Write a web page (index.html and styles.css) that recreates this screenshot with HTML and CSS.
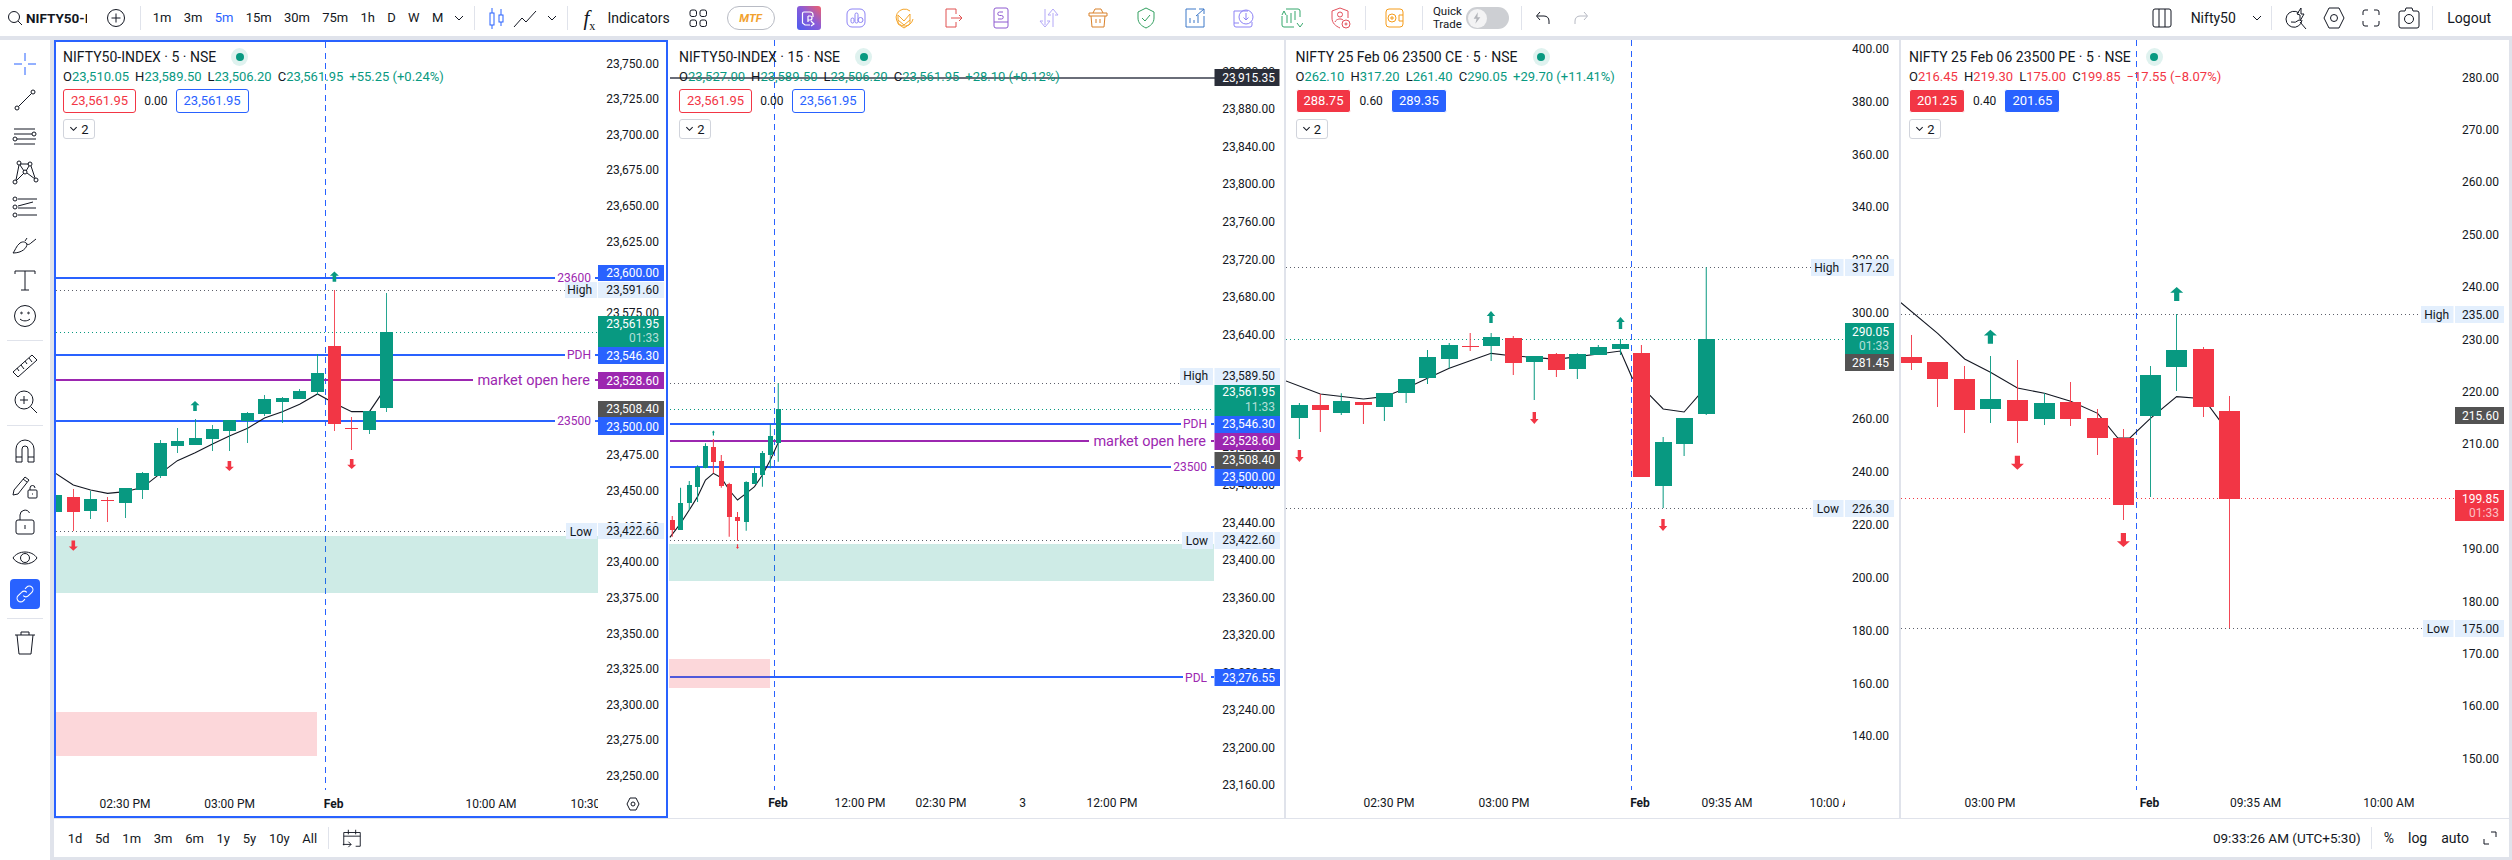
FILE: index.html
```html
<!DOCTYPE html>
<html lang="en">
<head>
<meta charset="utf-8">
<title>NIFTY50-INDEX chart</title>
<link rel="stylesheet" href="styles.css">
</head>
<body>
<div class="app">
<header class="topbar">
  <div class="search"><svg class="i16" viewBox="0 0 16 16"><circle cx="7" cy="7" r="5.5"/><path d="M11 11l4 4"/></svg><span class="sym">NIFTY50-INDEX</span></div>
  <button class="ib w18 add"><svg class="i18" viewBox="0 0 18 18"><circle cx="9" cy="9" r="8.5"/><path d="M9 4.5v9M4.5 9h9"/></svg></button>
  <i class="sep"></i>
  <nav class="tfs">
    <span>1m</span><span>3m</span><span class="on">5m</span><span>15m</span><span>30m</span><span>75m</span><span>1h</span><span>D</span><span>W</span><span>M</span>
    <svg class="chev" viewBox="0 0 10 6"><path d="M1 1l4 4 4-4"/></svg>
  </nav>
  <i class="sep s-a"></i>
  <button class="ib w41"><svg class="i24 blue" viewBox="0 0 24 24"><path d="M8 2v5M8 19v4M17 3v6M17 16v4"/><rect x="6" y="7" width="4" height="12"/><rect x="15" y="9" width="4" height="7"/></svg></button>
  <button class="ib w18"><svg class="i24" viewBox="0 0 24 24"><path d="M1 21l8-9 4 4 10-11"/></svg></button>
  <svg class="chev chev-b" viewBox="0 0 10 6"><path d="M1 1l4 4 4-4"/></svg>
  <i class="sep"></i>
  <span class="fx">f<sub>x</sub></span>
  <span class="label">Indicators</span>
  <svg class="i24 grid" viewBox="0 0 24 24"><rect x="4" y="4" width="6.5" height="6.5" rx="2"/><rect x="14" y="4" width="6.5" height="6.5" rx="2"/><rect x="4" y="14" width="6.5" height="6.5" rx="2"/><rect x="14" y="14" width="6.5" height="6.5" rx="2"/></svg>
  <span class="mtf">MTF</span>
  <svg class="brand" viewBox="0 0 24 24"><defs><linearGradient id="gb" x1="0" y1="1" x2="1" y2="0"><stop offset="0" stop-color="#4b5cf0"/><stop offset=".55" stop-color="#8d5bd6"/><stop offset="1" stop-color="#f0606a"/></linearGradient></defs><rect width="24" height="24" rx="3" fill="url(#gb)"/><path d="M7 6h6a3 3 0 0 1 3 3v2M7 6a1.500 1.500 0 0 0-1.500 1.500V17L8 19h5M11 10v6M11 10h2a2 2 0 0 1 0 4h-2M14 15l3 3-3 2" class="wh"/></svg>
  <div class="apps">
    <button class="ib w48"><svg class="i24 c-lav" viewBox="0 0 24 24"><rect x="3" y="3" width="18" height="18" rx="5"/><rect x="7" y="12" width="3" height="5" rx="1.500"/><rect x="11" y="7" width="3" height="10" rx="1.500"/><circle cx="16.500" cy="14" r="2.500"/></svg></button>
    <button class="ib w48"><svg class="i24 c-org" viewBox="0 0 24 24"><path d="M18 5a8.500 8.500 0 1 0 3 8M6 9l6 6 6-7v10l-6 4-6-4zM6 14l6 5 6-5"/></svg></button>
    <button class="ib w48"><svg class="i24 c-red" viewBox="0 0 24 24"><path d="M15 8V3H5v18h10v-5M10 12h11M18 9l3 3-3 3"/></svg></button>
    <button class="ib w48"><svg class="i24 c-pur" viewBox="0 0 24 24"><rect x="5" y="2" width="14" height="20" rx="2"/><path d="M5 16h14M14 6h-3.500a1.500 1.500 0 0 0 0 3.500h2a1.500 1.500 0 0 1 0 3.500H9"/></svg></button>
    <button class="ib w48"><svg class="i24 c-lil" viewBox="0 0 24 24"><path d="M8 3v16M8 21l-5-6h3M8 21l5-6h-3M16 21V7M16 3l-5 6h3M16 3l5 6h-3"/></svg></button>
    <button class="ib w48"><svg class="i24 c-brn" viewBox="0 0 24 24"><path d="M3 7h18v3H3zM5 10l1 11h12l1-11M7 7l2-4h6l2 4M10 13v4M14 13v4"/></svg></button>
    <button class="ib w48"><svg class="i24 c-grn" viewBox="0 0 24 24"><path d="M12 2l8 4v6c0 5-3.500 8-8 10-4.500-2-8-5-8-10V6zM8 12l3 3 5-6"/></svg></button>
    <button class="ib w48"><svg class="i24 c-blu" viewBox="0 0 24 24"><path d="M13 3H3v18h18V10M7 17v-5M11 17v-3M15 17V9M13 10l8-7M16 3h5v5"/></svg></button>
    <button class="ib w48"><svg class="i24 c-lav" viewBox="0 0 24 24"><path d="M3 5h14M3 5v14a2 2 0 0 0 2 2h14a2 2 0 0 0 2-2v-3M3 17h5"/><circle cx="15" cy="11" r="7"/><path d="M15 7v7M12.500 11.500L15 14l2.500-2.500"/></svg></button>
    <button class="ib w48"><svg class="i24 c-gr2" viewBox="0 0 24 24"><path d="M7 3h12a2 2 0 0 1 2 2v6M3 10v9a2 2 0 0 0 2 2h10M8 9v8M12 7v10M16 5v9M3 9l2-4 2 4M18 17l3 4 3-4"/></svg></button>
    <button class="ib w48"><svg class="i24 c-rd2" viewBox="0 0 24 24"><path d="M12 2l8 3v7M12 22c-4.500-2-8-5-8-10V5l8-3"/><circle cx="12" cy="8.500" r="2.500"/><path d="M7 16c1-3 6-4 8-2"/><circle cx="18" cy="18" r="4"/><circle cx="18" cy="18" r="1"/></svg></button>
  </div>
  <i class="sep s-b"></i>
  <button class="ib w56"><svg class="i24 c-wal" viewBox="0 0 24 24"><rect x="4" y="3" width="17" height="18" rx="3"/><path d="M21 9h-4v6h4"/><circle cx="10" cy="12" r="4"/><path d="M10 10v4M8 12h4"/></svg></button>
  <i class="sep"></i>
  <span class="quick">Quick<br>Trade</span>
  <span class="toggle"><span class="knob"><svg viewBox="0 0 12 16"><path d="M7 1L2 9h3.500L4 15l6-8H6.500z"/></svg></span></span>
  <i class="sep s-c"></i>
  <button class="ib w42"><svg class="i18" viewBox="0 0 18 18"><path d="M6 3L2.500 7 6 11M3 7h7c3 0 5 2 5 5v3"/></svg></button>
  <button class="ib w34 off"><svg class="i18" viewBox="0 0 18 18"><path d="M12 3l3.500 4-3.500 4M15 7H8c-3 0-5 2-5 5v3"/></svg></button>
  <div class="right">
    <svg class="i24 cols" viewBox="0 0 24 24"><rect x="3" y="3" width="18" height="18" rx="2"/><path d="M9 3v18M15 3v18"/></svg>
    <span class="label lay">Nifty50</span>
    <svg class="chev chev-c" viewBox="0 0 10 6"><path d="M1 1l4 4 4-4"/></svg>
    <i class="sep"></i>
    <button class="ib w38 q"><svg class="i24" viewBox="0 0 24 24"><path d="M15 7a8 8 0 1 0 3 7M15 14a8 8 0 0 1-8 2M16 16l6 7M13 8l4-6v6h3l-4 7v-6z"/></svg></button>
    <button class="ib w375"><svg class="i24" viewBox="0 0 24 24"><path d="M2 12l5-10h10l5 10-5 10H7z"/><circle cx="12" cy="12" r="3.500"/></svg></button>
    <button class="ib w375"><svg class="i18" viewBox="0 0 18 18"><path d="M1 6V3a2 2 0 0 1 2-2h3M12 1h3a2 2 0 0 1 2 2v3M17 12v3a2 2 0 0 1-2 2h-3M6 17H3a2 2 0 0 1-2-2v-3"/></svg></button>
    <button class="ib w375"><svg class="i24" viewBox="0 0 24 24"><path d="M8 5l1-3h6l1 3h4a2 2 0 0 1 2 2v13a2 2 0 0 1-2 2H4a2 2 0 0 1-2-2V7a2 2 0 0 1 2-2z"/><circle cx="12" cy="13" r="4.500"/></svg></button>
    <i class="sep s-d"></i>
    <span class="label logout">Logout</span>
  </div>
</header>

<div class="main">
<nav class="tools">
  <button class="tool blue"><svg viewBox="0 0 28 28"><path d="M14 3v8M14 17v8M3 14h8M17 14h8"/></svg></button>
  <button class="tool"><svg viewBox="0 0 28 28"><circle cx="6" cy="22" r="2"/><circle cx="22" cy="6" r="2"/><path d="M7.500 20.500l13-13"/></svg></button>
  <button class="tool"><svg viewBox="0 0 28 28"><path d="M3 7h21M3 12h18M6 17h19M3 22h21"/><circle cx="23" cy="12" r="2"/><circle cx="4" cy="17" r="2"/></svg></button>
  <button class="tool"><svg viewBox="0 0 28 28"><circle cx="4" cy="24" r="2"/><circle cx="8" cy="5" r="2"/><circle cx="14" cy="14" r="2"/><circle cx="19" cy="6" r="2"/><circle cx="25" cy="22" r="2"/><path d="M5 22L8 7M9 7l4 6M5 23l8-8M15 13l3-5M16 15l8 6M20 8l4 12M9 6l9 0"/></svg></button>
  <button class="tool"><svg viewBox="0 0 28 28"><path d="M7 5h19M7 12l15-4M7 14h18M7 21h19"/><circle cx="4" cy="5" r="2"/><circle cx="4" cy="13" r="2"/><circle cx="4" cy="21" r="2"/></svg></button>
  <button class="tool"><svg viewBox="0 0 28 28"><path d="M2 23c2-2 3-7 7-10 3-2 6-1 7 1 0 4-5 9-14 9zM15 13c1 2 3 2 5 0l5-4M16 8l-2 3"/></svg></button>
  <button class="tool"><svg viewBox="0 0 28 28"><path d="M4 8V5h20v3M14 5v19M10 24h8"/></svg></button>
  <button class="tool"><svg viewBox="0 0 28 28"><circle cx="14" cy="14" r="10.500"/><path d="M9 17c2.500 2.500 7.500 2.500 10 0"/><circle cx="10.500" cy="11" r=".8"/><circle cx="17.500" cy="11" r=".8"/></svg></button>
  <i class="hr"></i>
  <button class="tool"><svg viewBox="0 0 28 28"><path d="M2 21L21 4l5 5L7 26zM6 17l2 3M10 14l3 4M14 10l2 3M18 7l3 4"/></svg></button>
  <button class="tool"><svg viewBox="0 0 28 28"><circle cx="13" cy="13" r="9"/><path d="M19.500 19.500L26 26M13 9v8M9 13h8"/></svg></button>
  <i class="hr"></i>
  <button class="tool"><svg viewBox="0 0 28 28"><path d="M5 26V13a9 9 0 0 1 18 0v13h-6V13a3 3 0 0 0-6 0v13zM5 21h6M17 21h6"/></svg></button>
  <button class="tool"><svg viewBox="0 0 28 28"><path d="M3 18L14 5l4 3L7 22l-5 1zM12 7l4 3"/><rect x="17" y="18" width="9" height="8" rx="1"/><path d="M19 18v-2a2.500 2.500 0 0 1 5 0M21.500 21.500v1"/></svg></button>
  <button class="tool"><svg viewBox="0 0 28 28"><rect x="5" y="12" width="18" height="14" rx="2"/><path d="M9 12V7a5 5 0 0 1 9.500-2M14 17v4"/></svg></button>
  <button class="tool"><svg viewBox="0 0 28 28"><path d="M2 14c5-8 19-8 24 0-5 8-19 8-24 0z"/><circle cx="14" cy="14" r="4.500"/></svg></button>
  <button class="tool active"><svg viewBox="0 0 28 28"><path d="M12 16a4 4 0 0 0 6 0l4-4a4 4 0 0 0-6-6l-2 2M16 12a4 4 0 0 0-6 0l-4 4a4 4 0 0 0 6 6l2-2"/></svg></button>
  <i class="hr"></i>
  <button class="tool"><svg viewBox="0 0 28 28"><path d="M4 6h20M10 6V3h8v3M6 6l2 19h12l2-19"/></svg></button>
</nav>

<div class="workspace">
<div class="panes">

<!-- pane 1 -->
<section class="pane p1 selected">
<svg class="plot" width="614" height="778" viewBox="54 40 614 778">
  <defs>
    <path id="au" d="M0-6L5-1H2V6H-2V-1H-5Z"/>
    <path id="ad" d="M0 6L5 1H2V-6H-2V1H-5Z"/>
    <clipPath id="c1"><rect x="56" y="42" width="542" height="774"/></clipPath>
    <clipPath id="c2"><rect x="669" y="40" width="545" height="778"/></clipPath>
    <clipPath id="c3"><rect x="1286" y="40" width="559" height="778"/></clipPath>
    <clipPath id="c4"><rect x="1901" y="40" width="554" height="778"/></clipPath>
  </defs>
  <path class="dash" d="M325.500 42V790"/>
  <path class="dot gy" d="M56 290.500H565M56 531.500H565"/>
  <path class="dot gn" d="M56 332.500H598"/>
  <path class="hl bl" d="M56 278H555M595 278H598M56 355H565M595 355H598M56 421H555M595 421H598"/>
  <path class="hl pu" d="M56 380H473M595 380H598"/>
  <rect class="zg" x="56" y="536" width="542" height="57"/>
  <rect class="zr" x="56" y="712" width="261" height="44"/>
  <g clip-path="url(#c1)"><g transform="translate(0 240) scale(.43367 .33333)">
    <path class="ema" d="M128 700L169 735 209 750 248 760 289 755 329 742 370 700 409 662 450 638 490 612 529 588 571 565 610 534 651 515 691 493 732 462 771 490 811 515 852 515 891 440"/>
    <path class="wg" stroke-width="2.300" d="M209 752V836M289 745V833M329 697V776M370 600V714M409 564V638M450 538V615M490 556V632M529 540V632M571 516V608M610 465V528M651 472V548M691 447V477M732 343V465M852 514V582M891 159V516"/>
    <path class="wr" stroke-width="2.300" d="M169 748V872M248 772V845M771 151V573M811 530V630"/>
    <path class="bg" stroke-width="30" d="M128 765V815M209 778V812M289 745V788M329 699V750M370 610V707M409 603V618M450 595V615M490 568V596M529 540V573M571 519V543M610 477V522M651 474V486M691 453V477M732 399V456M852 514V569M891 277V504"/>
    <path class="br" stroke-width="30" d="M169 772V815M248 780V783M771 318V551M811 564V567"/>
  </g></g>
  <use href="#au" class="fg" transform="translate(195 406) scale(.9 .85)"/>
  <use href="#au" class="fg" transform="translate(334.400 276.700) scale(.9 .85)"/>
  <use href="#ad" class="fr" transform="translate(229.400 466) scale(.9 .85)"/>
  <use href="#ad" class="fr" transform="translate(351.700 464) scale(.9 .85)"/>
  <use href="#ad" class="fr" transform="translate(73.300 545.700) scale(.9 .85)"/>
  <g class="ax">
    <text x="659" y="63.500">23,750.00</text><text x="659" y="99.100">23,725.00</text><text x="659" y="134.800">23,700.00</text><text x="659" y="170.400">23,675.00</text><text x="659" y="206">23,650.00</text><text x="659" y="241.600">23,625.00</text><text x="659" y="312.900">23,575.00</text><text x="659" y="455.400">23,475.00</text><text x="659" y="491">23,450.00</text><text x="659" y="526.600">23,425.00</text><text x="659" y="562.300">23,400.00</text><text x="659" y="597.900">23,375.00</text><text x="659" y="633.500">23,350.00</text><text x="659" y="669.100">23,325.00</text><text x="659" y="704.800">23,300.00</text><text x="659" y="740.400">23,275.00</text><text x="659" y="776">23,250.00</text>
  </g>
  <rect class="lb-bl" x="598" y="265" width="66" height="16"/>
  <rect class="lb-lt" x="565" y="282" width="32" height="16"/><rect class="lb-lt" x="598" y="282" width="66" height="16"/>
  <rect class="lb-gn" x="598" y="316" width="66" height="31"/>
  <rect class="lb-bl" x="598" y="347" width="66" height="17"/>
  <rect class="lb-pu" x="598" y="372" width="66" height="17"/>
  <rect class="lb-gy" x="598" y="401" width="66" height="16"/>
  <rect class="lb-bl" x="598" y="417" width="66" height="18"/>
  <rect class="lb-lt" x="566" y="523" width="31" height="16"/><rect class="lb-lt" x="598" y="523" width="66" height="16"/>
  <g class="lw">
    <text x="659" y="273">23,600.00</text><text x="659" y="324">23,561.95</text><text class="tm" x="659" y="338">01:33</text><text x="659" y="355.500">23,546.30</text><text x="659" y="380.500">23,528.60</text><text x="659" y="409">23,508.40</text><text x="659" y="426.500">23,500.00</text>
  </g>
  <g class="ld">
    <text x="659" y="290">23,591.60</text><text x="659" y="531">23,422.60</text><text x="592" y="290">High</text><text x="592" y="531.500">Low</text>
  </g>
  <g class="tagp">
    <text x="591" y="278">23600</text><text x="591" y="355">PDH</text><text x="591" y="421">23500</text><text class="big" x="590" y="380">market open here</text>
  </g>
  <g clip-path="url(#c1)" class="tx">
    <text x="125" y="804">02:30 PM</text><text x="229.600" y="804">03:00 PM</text><text class="b" x="333.700" y="804">Feb</text><text x="491" y="804">10:00 AM</text><text x="596" y="804">10:30 AM</text>
  </g>
  <path class="gear" d="M627 804l3-6h6l3 6-3 6h-6z"/><circle class="gear" cx="633" cy="804" r="2"/>
</svg>
<div class="legend">
  <div class="title">NIFTY50-INDEX · 5 · NSE<i class="live"></i></div>
  <div class="ohlc gr"><b>O</b>23,510.05<b>H</b>23,589.50<b>L</b>23,506.20<b>C</b>23,561.95<span>+55.25 (+0.24%)</span></div>
  <div class="quotes"><span class="q-r">23,561.95</span><em>0.00</em><span class="q-b">23,561.95</span></div>
  <button class="coll"><svg viewBox="0 0 10 6"><path d="M1.500 1l3.500 3.500L8.500 1"/></svg>2</button>
</div>
</section>

<!-- pane 2 -->
<section class="pane p2">
<svg class="plot" width="616" height="778" viewBox="668 40 616 778">
  <path class="dash" d="M774.500 40V790"/>
  <path class="dot gy" d="M670 383.500H1180M670 540.500H1182"/>
  <path class="dot gn" d="M670 409.500H1214"/>
  <path class="hl dk" d="M670 78H1215"/>
  <path class="hl bl" d="M670 424H1181M1211 424H1214M670 467H1171M1211 467H1214M670 677H1183M1211 677H1214"/>
  <path class="hl pu" d="M670 441H1089M1211 441H1214"/>
  <rect class="zg" x="669" y="544" width="545" height="37"/>
  <rect class="zr" x="669" y="659" width="101" height="29"/>
  <g clip-path="url(#c2)"><g transform="translate(660 340) scale(.39541 .33333)">
    <path class="ema" d="M25 592L52 550 74 510 95 470 115 420 135 400 155 413 175 450 196 480 218 460 239 440 259 405 279 360 299 308"/>
    <path class="wg" stroke-width="2.530" d="M52 443V570M74 423V510M95 376V486M115 310V385M218 424V572M239 382V432M259 333V440M279 252V385M299 130V365"/>
    <path class="wr" stroke-width="2.530" d="M31 528V590M135 297V400M155 345V443M175 428V590M196 516V602"/>
    <path class="bg" stroke-width="13" d="M52 489V570M74 435V489M95 380V440M115 318V385M218 426V545M239 400V432M259 339V405M279 288V345M299 207V308"/>
    <path class="br" stroke-width="13" d="M31 540V570M135 322V366M155 363V438M175 432V530M196 531V543"/>
  </g></g>
  <use href="#au" class="fg" transform="translate(713.400 433) scale(.3 .4)"/>
  <use href="#ad" class="fr" transform="translate(737.500 546.700) scale(.3 .4)"/>
  <g class="ax">
    <text x="1275" y="71.700">23,920.00</text><text x="1275" y="109.300">23,880.00</text><text x="1275" y="146.900">23,840.00</text><text x="1275" y="184.400">23,800.00</text><text x="1275" y="222">23,760.00</text><text x="1275" y="259.500">23,720.00</text><text x="1275" y="297.100">23,680.00</text><text x="1275" y="334.700">23,640.00</text><text x="1275" y="447.300">23,520.00</text><text x="1275" y="484.900">23,480.00</text><text x="1275" y="522.500">23,440.00</text><text x="1275" y="560">23,400.00</text><text x="1275" y="597.600">23,360.00</text><text x="1275" y="635.100">23,320.00</text><text x="1275" y="672.700">23,280.00</text><text x="1275" y="710.300">23,240.00</text><text x="1275" y="747.800">23,200.00</text><text x="1275" y="785.400">23,160.00</text>
  </g>
  <rect class="lb-dk" x="1214.500" y="69" width="65" height="17"/>
  <rect class="lb-lt" x="1180" y="368" width="33" height="17"/><rect class="lb-lt" x="1214.500" y="368" width="65.500" height="17"/>
  <rect class="lb-gn" x="1214.500" y="385" width="65.500" height="31"/>
  <rect class="lb-bl" x="1214.500" y="416" width="65.500" height="17"/>
  <rect class="lb-pu" x="1214.500" y="433" width="65.500" height="17"/>
  <rect class="lb-gy" x="1214.500" y="452" width="65.500" height="17"/>
  <rect class="lb-bl" x="1214.500" y="469" width="65.500" height="17"/>
  <rect class="lb-lt" x="1182" y="532" width="31" height="17"/><rect class="lb-lt" x="1214.500" y="532" width="65.500" height="17"/>
  <rect class="lb-bl" x="1214.500" y="669" width="65.500" height="17"/>
  <g class="lw">
    <text x="1275" y="77.500">23,915.35</text><text x="1275" y="392">23,561.95</text><text class="tm" x="1275" y="406.700">11:33</text><text x="1275" y="423.500">23,546.30</text><text x="1275" y="441">23,528.60</text><text x="1275" y="459.500">23,508.40</text><text x="1275" y="477">23,500.00</text><text x="1275" y="677.500">23,276.55</text>
  </g>
  <g class="ld">
    <text x="1275" y="376">23,589.50</text><text x="1275" y="540">23,422.60</text><text x="1208" y="376">High</text><text x="1208" y="540.500">Low</text>
  </g>
  <g class="tagp">
    <text x="1207" y="424">PDH</text><text x="1207" y="467">23500</text><text x="1207" y="677.500">PDL</text><text class="big" x="1206" y="441">market open here</text>
  </g>
  <g class="tx">
    <text class="b" x="778" y="803">Feb</text><text x="860" y="803">12:00 PM</text><text x="941" y="803">02:30 PM</text><text x="1022.600" y="803">3</text><text x="1112" y="803">12:00 PM</text>
  </g>
</svg>
<div class="legend">
  <div class="title">NIFTY50-INDEX · 15 · NSE<i class="live"></i></div>
  <div class="ohlc gr"><b>O</b>23,527.00<b>H</b>23,589.50<b>L</b>23,506.20<b>C</b>23,561.95<span>+28.10 (+0.12%)</span></div>
  <div class="quotes"><span class="q-r">23,561.95</span><em>0.00</em><span class="q-b">23,561.95</span></div>
  <button class="coll"><svg viewBox="0 0 10 6"><path d="M1.500 1l3.500 3.500L8.500 1"/></svg>2</button>
</div>
</section>

<!-- pane 3 -->
<section class="pane p3">
<svg class="plot" width="613" height="778" viewBox="1286 40 613 778">
  <path class="dash" d="M1631.500 40V790"/>
  <path class="dot gy" d="M1286 267.500H1811M1286 508.500H1813"/>
  <path class="dot gn" d="M1286 339.500H1845"/>
  <g clip-path="url(#c3)"><g transform="translate(1280 240) scale(.39541 .33333)">
    <path class="ema" d="M15 423L102 462 211 477 264 470 319 445 373 415 428 385 481 362 534 340 590 348 643 352 699 358 752 350 805 342 861 333 890 412 914 440 969 507 1022 516 1078 440"/>
    <path class="wg" stroke-width="2.530" d="M49 489V597M155 460V525M264 459V543M319 417V489M373 330V432M428 309V385M534 279V363M643 348V480M752 340V417M805 315V345M861 297V345M969 591V804M1022 534V648M1078 82V525"/>
    <path class="wr" stroke-width="2.530" d="M102 462V576M211 486V552M481 279V333M590 288V405M699 339V411M914 315V340"/>
    <path class="bg" stroke-width="43" d="M49 495V534M155 483V519M264 459V501M319 417V459M373 351V414M428 315V357M534 291V318M643 348V366M752 342V387M805 321V345M861 312V327M969 606V738M1022 534V612M1078 297V522"/>
    <path class="br" stroke-width="43" d="M102 495V510M211 486V495M481 318V321M590 294V369M699 342V390M914 339V711"/>
  </g></g>
  <use href="#au" class="fg" transform="translate(1491 317) scale(.85 1)"/>
  <use href="#au" class="fg" transform="translate(1620.500 323) scale(.85 1)"/>
  <use href="#ad" class="fr" transform="translate(1299.400 456) scale(.85 1)"/>
  <use href="#ad" class="fr" transform="translate(1534.300 418) scale(.85 1)"/>
  <use href="#ad" class="fr" transform="translate(1663 525) scale(.85 1)"/>
  <g class="ax">
    <text x="1889" y="48.700">400.00</text><text x="1889" y="101.600">380.00</text><text x="1889" y="154.500">360.00</text><text x="1889" y="207.400">340.00</text><text x="1889" y="260.300">320.00</text><text x="1889" y="313.200">300.00</text><text x="1889" y="419">260.00</text><text x="1889" y="471.900">240.00</text><text x="1889" y="524.800">220.00</text><text x="1889" y="577.700">200.00</text><text x="1889" y="630.600">180.00</text><text x="1889" y="683.500">160.00</text><text x="1889" y="736.400">140.00</text>
  </g>
  <rect class="lb-lt" x="1811" y="259" width="32.500" height="17"/><rect class="lb-lt" x="1845" y="259" width="49" height="17"/>
  <rect class="lb-gn" x="1845" y="323" width="49" height="31"/>
  <rect class="lb-gy" x="1845" y="354" width="49" height="17"/>
  <rect class="lb-lt" x="1813" y="500" width="30.500" height="17"/><rect class="lb-lt" x="1845" y="500" width="49" height="17"/>
  <g class="lw">
    <text x="1889" y="331.700">290.05</text><text class="tm" x="1889" y="345.700">01:33</text><text x="1889" y="362.700">281.45</text>
  </g>
  <g class="ld">
    <text x="1889" y="267.500">317.20</text><text x="1889" y="508.500">226.30</text><text x="1839" y="267.500">High</text><text x="1839" y="508.500">Low</text>
  </g>
  <g clip-path="url(#c3)" class="tx">
    <text x="1389" y="803">02:30 PM</text><text x="1504" y="803">03:00 PM</text><text class="b" x="1640" y="803">Feb</text><text x="1727" y="803">09:35 AM</text><text x="1835" y="803">10:00 AM</text>
  </g>
</svg>
<div class="legend">
  <div class="title">NIFTY 25 Feb 06 23500 CE · 5 · NSE<i class="live"></i></div>
  <div class="ohlc gr"><b>O</b>262.10<b>H</b>317.20<b>L</b>261.40<b>C</b>290.05<span>+29.70 (+11.41%)</span></div>
  <div class="quotes solid"><span class="q-r">288.75</span><em>0.60</em><span class="q-b">289.35</span></div>
  <button class="coll"><svg viewBox="0 0 10 6"><path d="M1.500 1l3.500 3.500L8.500 1"/></svg>2</button>
</div>
</section>

<!-- pane 4 -->
<section class="pane p4">
<svg class="plot" width="608" height="778" viewBox="1901 40 608 778">
  <path class="dash" d="M2136.500 40V790"/>
  <path class="dot gy" d="M1901 314.500H2421M1901 628.500H2423"/>
  <path class="dot rd" d="M1901 498.500H2455"/>
  <g clip-path="url(#c4)"><g transform="translate(1880 240) scale(.40306 .33333)">
    <path class="ema" d="M52 188L143 280 210 357 274 397 341 444 408 460 473 484 540 520 590 594 620 594 671 535 736 470 803 476 845 545 867 580"/>
    <path class="wg" stroke-width="2.480" d="M274 348V549M408 460V555M671 378V771M736 222V453"/>
    <path class="wr" stroke-width="2.480" d="M78 285V390M143 366V501M210 378V579M341 360V609M473 426V558M540 507V645M604 567V840M803 321V531M867 468V1164"/>
    <path class="bg" stroke-width="52" d="M274 477V507M408 489V537M671 405V528M736 330V381"/>
    <path class="br" stroke-width="52" d="M78 351V369M143 366V417M210 417V510M341 480V543M473 486V537M540 534V594M604 594V795M803 327V501M867 513V777"/>
  </g></g>
  <use href="#au" class="fg" transform="translate(1990.400 336.700) scale(1.300 1.170)"/>
  <use href="#au" class="fg" transform="translate(2176.700 294) scale(1.300 1.170)"/>
  <use href="#ad" class="fr" transform="translate(2017.400 462.700) scale(1.300 1.170)"/>
  <use href="#ad" class="fr" transform="translate(2123.400 540) scale(1.300 1.170)"/>
  <g class="ax">
    <text x="2499" y="77.500">280.00</text><text x="2499" y="129.900">270.00</text><text x="2499" y="182.300">260.00</text><text x="2499" y="234.700">250.00</text><text x="2499" y="287.100">240.00</text><text x="2499" y="339.500">230.00</text><text x="2499" y="391.900">220.00</text><text x="2499" y="444.300">210.00</text><text x="2499" y="549.100">190.00</text><text x="2499" y="601.500">180.00</text><text x="2499" y="653.900">170.00</text><text x="2499" y="706.300">160.00</text><text x="2499" y="758.700">150.00</text>
  </g>
  <rect class="lb-lt" x="2421" y="306" width="32.500" height="17"/><rect class="lb-lt" x="2455" y="306" width="49" height="17"/>
  <rect class="lb-gy" x="2455" y="407" width="49" height="17"/>
  <rect class="lb-rd" x="2455" y="490" width="49" height="31"/>
  <rect class="lb-lt" x="2423" y="620" width="30.500" height="17"/><rect class="lb-lt" x="2455" y="620" width="49" height="17"/>
  <g class="lw">
    <text x="2499" y="415.700">215.60</text><text x="2499" y="498.700">199.85</text><text class="tm" x="2499" y="512.700">01:33</text>
  </g>
  <g class="ld">
    <text x="2499" y="314.500">235.00</text><text x="2499" y="628.500">175.00</text><text x="2449" y="314.500">High</text><text x="2449" y="628.500">Low</text>
  </g>
  <g class="tx">
    <text x="1990" y="803">03:00 PM</text><text class="b" x="2149.500" y="803">Feb</text><text x="2255.700" y="803">09:35 AM</text><text x="2388.800" y="803">10:00 AM</text>
  </g>
</svg>
<div class="legend">
  <div class="title">NIFTY 25 Feb 06 23500 PE · 5 · NSE<i class="live"></i></div>
  <div class="ohlc rd"><b>O</b>216.45<b>H</b>219.30<b>L</b>175.00<b>C</b>199.85<span>−17.55 (−8.07%)</span></div>
  <div class="quotes solid"><span class="q-r">201.25</span><em>0.40</em><span class="q-b">201.65</span></div>
  <button class="coll"><svg viewBox="0 0 10 6"><path d="M1.500 1l3.500 3.500L8.500 1"/></svg>2</button>
</div>
</section>
</div>

<footer class="rangebar">
  <nav class="ranges"><span>1d</span><span>5d</span><span>1m</span><span>3m</span><span>6m</span><span>1y</span><span>5y</span><span>10y</span><span>All</span></nav>
  <i class="sep"></i>
  <svg class="cal" viewBox="0 0 24 24"><path d="M3 20V6h18v15h-5M3 10h18M8 3v5M16 3v5M2 19h9M8 16l3 3-3 3"/></svg>
  <div class="status">
    <span class="clock">09:33:26 AM (UTC+5:30)</span><i class="sep"></i>
    <span>%</span><span>log</span><span>auto</span>
    <svg class="corners" viewBox="0 0 14 14"><path d="M1 8v5h5M8 1h5v5"/></svg>
  </div>
</footer>
</div>
</div>
</div>
</body>
</html>
```
FILE: styles.css
```css
* { box-sizing: border-box; }
html, body { margin: 0; padding: 0; background: #e0e3eb; }
body { font-family: Roboto, "Liberation Sans", sans-serif; color: #131722; overflow: hidden; }
button { border: 0; background: none; padding: 0; margin: 0; font: inherit; color: inherit; }
svg { display: block; flex: none; }
em { font-style: normal; }

.app { width: 2512px; height: 860px; display: flex; flex-direction: column; }

/* top bar */
.topbar { height: 36px; background: #fff; display: flex; align-items: center; flex: none; font-size: 13px; }
.topbar svg:not(.brand) { fill: none; stroke: currentColor; stroke-width: 1; }
.i16 { width: 16px; height: 16px; }
.i18 { width: 18px; height: 18px; }
.i24 { width: 24px; height: 24px; }
.search { width: 87px; padding-left: 7px; display: flex; align-items: center; gap: 3px; overflow: hidden; flex: none; }
.sym { font-weight: 700; font-size: 13.500px; white-space: nowrap; }
.ib { display: flex; align-items: center; justify-content: center; flex: none; height: 36px; }
.w18 { width: 18px; } .w34 { width: 34px; } .w38 { width: 38px; } .w375 { width: 37.500px; }
.w41 { width: 41px; } .w42 { width: 42px; } .w48 { width: 48.400px; } .w56 { width: 56px; }
.add { margin: 0 15px 0 20px; }
.sep { display: block; width: 1px; height: 24px; background: #e0e3eb; flex: none; }
.tfs { display: flex; align-items: center; margin-left: 5.500px; }
.tfs span { padding: 0 6.150px; line-height: 36px; white-space: nowrap; }
.tfs .on { color: #2962ff; }
.chev { width: 10px; height: 6px; flex: none; }
.tfs .chev { margin: 0 10px 0 5px; }
.chev-b { margin: 0 10px 0 13px; }
.chev-c { margin: 0 9px 0 16px; }
.blue { color: #2962ff; }
.fx { margin-left: 15px; width: 24px; font: italic 21px "Liberation Serif", serif; line-height: 1; flex: none; }
.fx sub { font-size: 12px; font-style: normal; vertical-align: -5px; line-height: 0; }
.label { font-size: 14px; white-space: nowrap; flex: none; }
.grid { margin-left: 16px; flex: none; }
.mtf { margin-left: 17px; width: 48px; height: 24px; border: 1px solid #b8bbc4; border-radius: 12px; display: flex; align-items: center; justify-content: center; font: italic 700 11.500px Roboto, sans-serif; color: #f2a22e; flex: none; }
.brand { width: 24px; height: 24px; margin-left: 22px; flex: none; }
.brand .wh { fill: none; stroke: #fff; stroke-width: 1.200; }
.apps { display: flex; margin-left: 11px; flex: none; }
.apps .i24, .c-wal { stroke-width: 1.200; }
.s-b { margin-left: 1px; }
.c-lav { color: #8d83f5; } .c-org { color: #f5a52a; } .c-red { color: #e05050; } .c-pur { color: #8e5bd0; }
.c-lil { color: #b3a8f7; } .c-brn { color: #d9812a; } .c-grn { color: #32a060; } .c-blu { color: #3d78c8; }
.c-gr2 { color: #35a76c; } .c-rd2 { color: #e2505c; } .c-wal { color: #f59c1a; }
.quick { margin-left: 10px; width: 30px; font-size: 11.500px; line-height: 13px; flex: none; }
.toggle { margin-left: 3px; width: 43px; height: 22px; border-radius: 11px; background: #cdcfd3; display: flex; align-items: center; padding-left: 2px; flex: none; }
.knob { width: 19px; height: 19px; border-radius: 50%; background: #f3f3f4; display: flex; align-items: center; justify-content: center; }
.topbar .knob svg { width: 10px; height: 14px; fill: #b3b5ba; stroke: none; }
.s-c { margin-left: 12px; }
.off { color: #b6b9c3; }
.right { margin-left: auto; display: flex; align-items: center; flex: none; padding-right: 21px; }
.cols { margin-right: 17px; flex: none; }
.q { margin-left: 5px; }
.s-d { margin-left: 5px; }
.logout { margin-left: 14px; }

/* layout */
.main { flex: 1; display: flex; padding-top: 4px; min-height: 0; }
.tools { width: 50px; background: #fff; flex: none; display: flex; flex-direction: column; align-items: center; padding-top: 6px; }
.tool { width: 36px; height: 36px; display: flex; align-items: center; justify-content: center; color: #131722; flex: none; }
.tool svg { width: 28px; height: 28px; fill: none; stroke: currentColor; stroke-width: 1; }
.tool.blue { color: #2962ff; }
.tool.active { width: 30px; height: 30px; margin: 3px 0; background: #2962ff; color: #fff; border-radius: 4px; }
.tool.active svg { width: 24px; height: 24px; stroke-width: 1.300; }
.hr { display: block; width: 36px; height: 1px; background: #e0e3eb; margin: 6px 0; flex: none; }
.workspace { margin: 0 3px 3px 4px; flex: 1; display: flex; flex-direction: column; min-width: 0; }
.panes { height: 778px; display: flex; flex: none; }

/* chart pane */
.pane { position: relative; height: 778px; background: #fff; flex: none; }
.p1 { width: 614px; }
.p2 { width: 616px; }
.p3 { width: 613px; margin-left: 2px; }
.p4 { width: 608px; margin-left: 2px; }
.selected::after { content: ""; position: absolute; inset: 0; border: 2px solid #2962ff; pointer-events: none; }
.plot { position: absolute; left: 0; top: 0; font-family: Roboto, "Liberation Sans", sans-serif; font-size: 12px; }
.plot text { dominant-baseline: central; }

.dash { stroke: #2962ff; stroke-width: 1; stroke-dasharray: 6 4.500; fill: none; shape-rendering: crispEdges; }
.dot { stroke-width: 1; stroke-dasharray: 1 3; fill: none; shape-rendering: crispEdges; }
.dot.gy { stroke: #5d606b; }
.dot.gn { stroke: #089981; }
.dot.rd { stroke: #f23645; }
.hl { stroke-width: 2; fill: none; shape-rendering: crispEdges; }
.hl.bl { stroke: #2962ff; }
.hl.pu { stroke: #9c27b0; }
.hl.dk { stroke: #6a6d78; }
.zg { fill: rgba(8, 153, 129, .2); }
.zr { fill: rgba(242, 54, 69, .2); }
.ema { fill: none; stroke: #131722; stroke-width: 1.100; vector-effect: non-scaling-stroke; }
.wg, .bg { stroke: #089981; fill: none; shape-rendering: crispEdges; }
.wr, .br { stroke: #f23645; fill: none; shape-rendering: crispEdges; }
.fg { fill: #089981; }
.fr { fill: #f23645; }

.ax text, .lw text, .ld text, .tagp text { text-anchor: end; }
.ax text, .ld text { fill: #131722; }
.lw text { fill: #fff; }
.lw .tm { fill: rgba(255, 255, 255, .7); }
.tagp text { fill: #9c27b0; }
.tagp .big { font-size: 14.500px; }
.tx text { text-anchor: middle; fill: #131722; }
.tx .b { font-weight: 700; }
.lb-bl { fill: #2962ff; }
.lb-pu { fill: #9c27b0; }
.lb-gn { fill: #089981; }
.lb-rd { fill: #f23645; }
.lb-gy { fill: #535353; }
.lb-dk { fill: #2a2e39; }
.lb-lt { fill: #e3effd; }
.gear { fill: none; stroke: #131722; stroke-width: 1; }

/* legend */
.legend { position: absolute; top: 6px; left: 9px; }
.p2 .legend { left: 11px; }
.p3 .legend { left: 9.500px; }
.p4 .legend { left: 8px; }
.title { height: 22px; display: flex; align-items: center; font-size: 14px; white-space: nowrap; }
.live { width: 17px; height: 18px; border-radius: 50%; margin-left: 15px; background: #dff2ef; display: flex; align-items: center; justify-content: center; }
.live::after { content: ""; width: 8px; height: 8px; border-radius: 50%; background: #089981; }
.ohlc { height: 18px; line-height: 18px; font-size: 13px; white-space: nowrap; }
.ohlc b { font-weight: 400; color: #131722; margin-left: 6px; }
.ohlc b:first-child { margin-left: 0; }
.ohlc span { margin-left: 6px; }
.gr { color: #089981; }
.rd { color: #f23645; }
.quotes { display: flex; align-items: center; margin-top: 3px; height: 24px; font-size: 13px; }
.quotes span { height: 24px; line-height: 22px; padding: 0 7px; border: 1px solid; border-radius: 3px; background: #fff; }
.quotes em { font-size: 12px; margin: 0 8px; }
.q-r { color: #f23645; border-color: #f23645; }
.q-b { color: #2962ff; border-color: #2962ff; }
.solid .q-r { background: #f23645; color: #fff; }
.solid .q-b { background: #2962ff; color: #fff; }
.coll { margin-top: 6px; height: 20px; width: 32px; border: 1px solid #d1d4dc; border-radius: 3px; background: #fff; display: flex; align-items: center; justify-content: center; gap: 3px; font-size: 13px; }
.coll svg { width: 9px; height: 6px; fill: none; stroke: #131722; stroke-width: 1.200; }

/* bottom bar */
.rangebar { flex: 1; background: #fff; border-top: 1px solid #e0e3eb; display: flex; align-items: center; font-size: 13px; }
.ranges { display: flex; padding-left: 7.350px; }
.ranges span { padding: 0 6.350px; }
.rangebar .sep { height: 22px; }
.ranges + .sep { margin-left: 4.600px; }
.cal { width: 22px; height: 22px; margin-left: 11.500px; fill: none; stroke: #131722; stroke-width: 1; }
.status { margin-left: auto; display: flex; align-items: center; padding-right: 12px; font-size: 14px; }
.status span { margin-left: 14px; }
.status .sep + span { margin-left: 12px; }
.status .clock { margin: 0 10px 0 0; font-size: 13.500px; }
.corners { width: 14px; height: 14px; margin-left: 14px; fill: none; stroke: #131722; stroke-width: 1; }
```
